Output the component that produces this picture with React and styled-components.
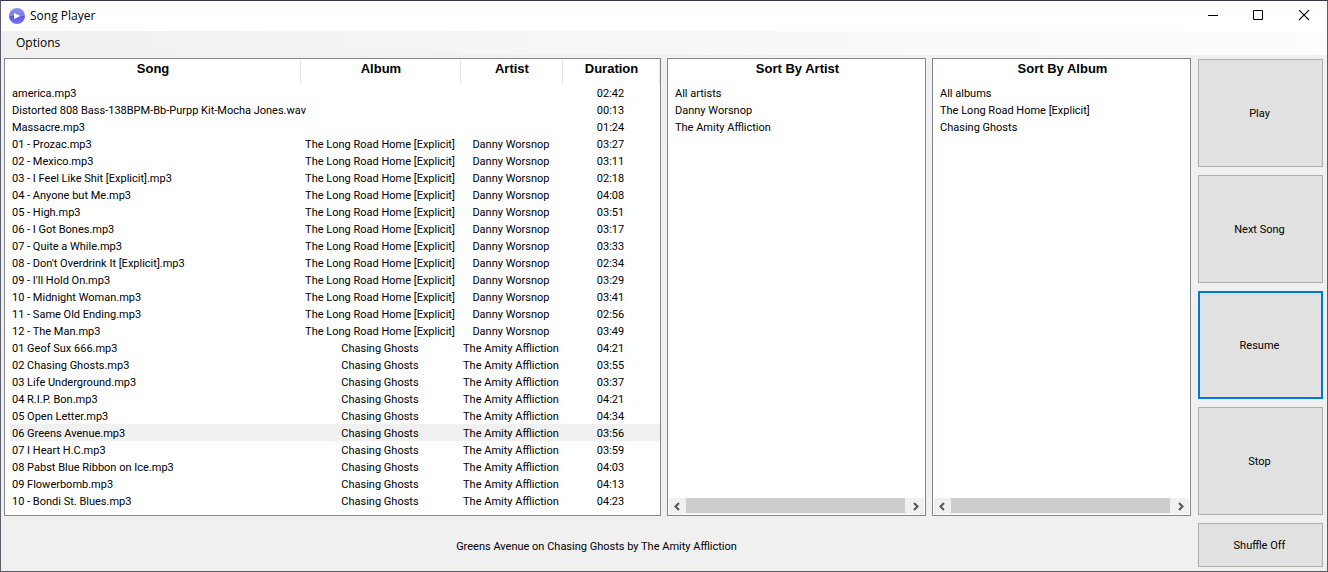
import React from "react";
import styled, { createGlobalStyle, css } from "styled-components";

const uiFont = 'Roboto, "Liberation Sans", Arial, sans-serif';
const headingFont = '"Liberation Sans", Arial, sans-serif';
const chromeFont = '"Open Sans", "Noto Sans", sans-serif';

const GlobalStyle = createGlobalStyle`
  *, *::before, *::after { box-sizing: border-box; }
  body { margin: 0; background: #f0f0f0; color: #000; font: 11px/17px ${uiFont}; }
  button { font: inherit; color: inherit; padding: 0; cursor: default; }
`;

const Window = styled.div`
  display: flex;
  flex-direction: column;
  min-height: 100vh;
  border: 1px solid #5b5d68;
  border-top-color: #34354d;
  background: #f0f0f0;
`;

const TitleBar = styled.header`
  display: flex;
  align-items: center;
  height: 30px;
  padding-left: 7px;
  background: #fff;
`;

const Title = styled.h1`
  flex: 1;
  margin: 0 0 0 5px;
  font: 400 12px/16px ${chromeFont};
`;

const WindowButton = styled.button`
  display: grid;
  place-items: center;
  width: 46px;
  height: 30px;
  border: 0;
  background: transparent;
`;

const MenuBar = styled.nav`
  display: flex;
  align-items: center;
  height: 24px;
  padding-left: 8px;
  background: linear-gradient(90deg, #f0f0f0, #fdfdfd);
`;

const MenuButton = styled.button`
  padding: 0 7px;
  border: 0;
  background: transparent;
  font: 12px/20px ${chromeFont};
`;

const Content = styled.main`
  flex: 1;
  display: grid;
  grid-template-columns: minmax(0, 1fr) 125px;
  column-gap: 7px;
  padding: 3px 4px 4px 3px;
`;

const Library = styled.div`
  display: flex;
  flex-direction: column;
`;

const Panels = styled.div`
  display: grid;
  grid-template-columns: minmax(0, 657fr) minmax(0, 259fr) minmax(0, 259fr);
  gap: 6px;
`;

const Panel = styled.section`
  display: flex;
  flex-direction: column;
  min-height: 458px;
  border: 1px solid #828790;
  background: #fff;
`;

const headingText = css`
  height: 25px;
  font: 700 13px/19px ${headingFont};
  text-align: center;
`;

const SongTable = styled.table`
  width: 100%;
  table-layout: fixed;
  border-collapse: separate;
  border-spacing: 0;
`;

const Column = styled.col`
  width: ${(p) => p.$share}%;
`;

const HeadCell = styled.th`
  ${headingText}
  padding: 0;
  vertical-align: top;
  background: linear-gradient(#e5e5e5, #e5e5e5) right 1px / 1px 24px no-repeat;
`;

const SongRow = styled.tr`
  background: ${(p) => (p.$current ? "#f0f0f0" : "transparent")};
`;

const Cell = styled.td`
  height: 17px;
  padding: 2px 2px 0 0;
  line-height: 15px;
  text-align: center;
  white-space: nowrap;
`;

const SongCell = styled(Cell)`
  padding-left: 2px;
  border-left: 5px solid #fff;
  text-align: left;
`;

const PanelHeading = styled.h2`
  ${headingText}
  margin: 0;
  padding-left: 2px;
`;

const FilterList = styled.ul`
  flex: 1;
  margin: 0;
  padding: 0 7px;
  list-style: none;
`;

const FilterButton = styled.button`
  display: block;
  padding-top: 2px;
  border: 0;
  background: transparent;
  line-height: 15px;
`;

const ScrollTrack = styled.div`
  display: flex;
  height: 16px;
  margin: 0 1px 1px;
  background: #f0f0f0;
`;

const ScrollArrow = styled.button`
  display: grid;
  place-items: center;
  width: 17px;
  border: 0;
  background: transparent;
`;

const ScrollThumb = styled.div`
  flex: 1;
  height: 15px;
  margin-right: 2px;
  background: #cdcdcd;
`;

const NowPlaying = styled.p`
  flex: 1;
  display: flex;
  align-items: center;
  justify-content: center;
  margin: 0;
  padding: 10px 2px 0 0;
`;

const Controls = styled.div`
  display: flex;
  flex-direction: column;
  gap: 8px;
  padding-top: 1px;
`;

const ControlButton = styled.button`
  height: ${(p) => (p.$short ? 44 : 108)}px;
  padding-right: 2px;
  border: ${(p) => (p.$focused ? "2px solid #0078d7" : "1px solid #adadad")};
  border-radius: 0;
  background: #e1e1e1;
`;

const road = ["The Long Road Home [Explicit]", "Danny Worsnop"];
const ghosts = ["Chasing Ghosts", "The Amity Affliction"];

const songs = [
  ["america.mp3", "", "", "02:42"],
  ["Distorted 808 Bass-138BPM-Bb-Purpp Kit-Mocha Jones.wav", "", "", "00:13"],
  ["Massacre.mp3", "", "", "01:24"],
  ["01 - Prozac.mp3", ...road, "03:27"],
  ["02 - Mexico.mp3", ...road, "03:11"],
  ["03 - I Feel Like Shit [Explicit].mp3", ...road, "02:18"],
  ["04 - Anyone but Me.mp3", ...road, "04:08"],
  ["05 - High.mp3", ...road, "03:51"],
  ["06 - I Got Bones.mp3", ...road, "03:17"],
  ["07 - Quite a While.mp3", ...road, "03:33"],
  ["08 - Don't Overdrink It [Explicit].mp3", ...road, "02:34"],
  ["09 - I'll Hold On.mp3", ...road, "03:29"],
  ["10 - Midnight Woman.mp3", ...road, "03:41"],
  ["11 - Same Old Ending.mp3", ...road, "02:56"],
  ["12 - The Man.mp3", ...road, "03:49"],
  ["01 Geof Sux 666.mp3", ...ghosts, "04:21"],
  ["02 Chasing Ghosts.mp3", ...ghosts, "03:55"],
  ["03 Life Underground.mp3", ...ghosts, "03:37"],
  ["04 R.I.P. Bon.mp3", ...ghosts, "04:21"],
  ["05 Open Letter.mp3", ...ghosts, "04:34"],
  ["06 Greens Avenue.mp3", ...ghosts, "03:56"],
  ["07 I Heart H.C.mp3", ...ghosts, "03:59"],
  ["08 Pabst Blue Ribbon on Ice.mp3", ...ghosts, "04:03"],
  ["09 Flowerbomb.mp3", ...ghosts, "04:13"],
  ["10 - Bondi St. Blues.mp3", ...ghosts, "04:23"],
];
const currentSong = "06 Greens Avenue.mp3";

const columns = [
  ["Song", 45.2],
  ["Album", 24.4],
  ["Artist", 15.6],
  ["Duration", 14.8],
];

function AppIcon() {
  return (
    <svg width="17" height="17" viewBox="0 0 17 17" aria-hidden="true">
      <defs>
        <linearGradient id="disc" x1="0" y1="0" x2="0" y2="1">
          <stop offset="0" stopColor="#8e90ee" />
          <stop offset="0.48" stopColor="#7d7eea" />
          <stop offset="0.52" stopColor="#5c5be0" />
          <stop offset="1" stopColor="#7775f4" />
        </linearGradient>
      </defs>
      <circle cx="9" cy="8" r="8" fill="url(#disc)" />
      <path d="M6 5 12.5 8 6 11Z" fill="#fff" />
    </svg>
  );
}

function Chevron({ direction }) {
  const d = direction === "left" ? "M6 1 2.5 4.5 6 8" : "M3 1 6.5 4.5 3 8";
  return (
    <svg width="9" height="9" viewBox="0 0 9 9" aria-hidden="true">
      <path d={d} fill="none" stroke="#555" strokeWidth="2" />
    </svg>
  );
}

function FilterPanel({ title, items }) {
  return (
    <Panel>
      <PanelHeading>{title}</PanelHeading>
      <FilterList>
        {items.map((item) => (
          <li key={item}>
            <FilterButton type="button">{item}</FilterButton>
          </li>
        ))}
      </FilterList>
      <ScrollTrack>
        <ScrollArrow type="button" aria-label="Scroll left">
          <Chevron direction="left" />
        </ScrollArrow>
        <ScrollThumb />
        <ScrollArrow type="button" aria-label="Scroll right">
          <Chevron direction="right" />
        </ScrollArrow>
      </ScrollTrack>
    </Panel>
  );
}

export default function App() {
  return (
    <>
      <GlobalStyle />
      <Window>
        <TitleBar>
          <AppIcon />
          <Title>Song Player</Title>
          <WindowButton type="button" aria-label="Minimize">
            <svg width="11" height="12" viewBox="0 0 11 12">
              <path d="M1 5.5H11" stroke="#000" />
            </svg>
          </WindowButton>
          <WindowButton type="button" aria-label="Maximize">
            <svg width="11" height="12" viewBox="0 0 11 12">
              <path d="M.5 .5H9.5V9.5H.5Z" fill="none" stroke="#000" />
            </svg>
          </WindowButton>
          <WindowButton type="button" aria-label="Close">
            <svg width="11" height="12" viewBox="0 0 11 12">
              <path d="M0 0 10 10M10 0 0 10" stroke="#000" strokeWidth="1.1" />
            </svg>
          </WindowButton>
        </TitleBar>
        <MenuBar>
          <MenuButton type="button">Options</MenuButton>
        </MenuBar>
        <Content>
          <Library>
            <Panels>
              <Panel>
                <SongTable>
                  <colgroup>
                    {columns.map(([name, share]) => (
                      <Column key={name} $share={share} />
                    ))}
                  </colgroup>
                  <thead>
                    <tr>
                      {columns.map(([name]) => (
                        <HeadCell key={name} scope="col">{name}</HeadCell>
                      ))}
                    </tr>
                  </thead>
                  <tbody>
                    {songs.map(([song, album, artist, duration]) => (
                      <SongRow key={song} $current={song === currentSong}>
                        <SongCell>{song}</SongCell>
                        <Cell>{album}</Cell>
                        <Cell>{artist}</Cell>
                        <Cell>{duration}</Cell>
                      </SongRow>
                    ))}
                  </tbody>
                </SongTable>
              </Panel>
              <FilterPanel
                title="Sort By Artist"
                items={["All artists", "Danny Worsnop", "The Amity Affliction"]}
              />
              <FilterPanel
                title="Sort By Album"
                items={["All albums", "The Long Road Home [Explicit]", "Chasing Ghosts"]}
              />
            </Panels>
            <NowPlaying>Greens Avenue on Chasing Ghosts by The Amity Affliction</NowPlaying>
          </Library>
          <Controls>
            <ControlButton type="button">Play</ControlButton>
            <ControlButton type="button">Next Song</ControlButton>
            <ControlButton type="button" $focused>Resume</ControlButton>
            <ControlButton type="button">Stop</ControlButton>
            <ControlButton type="button" $short>Shuffle Off</ControlButton>
          </Controls>
        </Content>
      </Window>
    </>
  );
}
